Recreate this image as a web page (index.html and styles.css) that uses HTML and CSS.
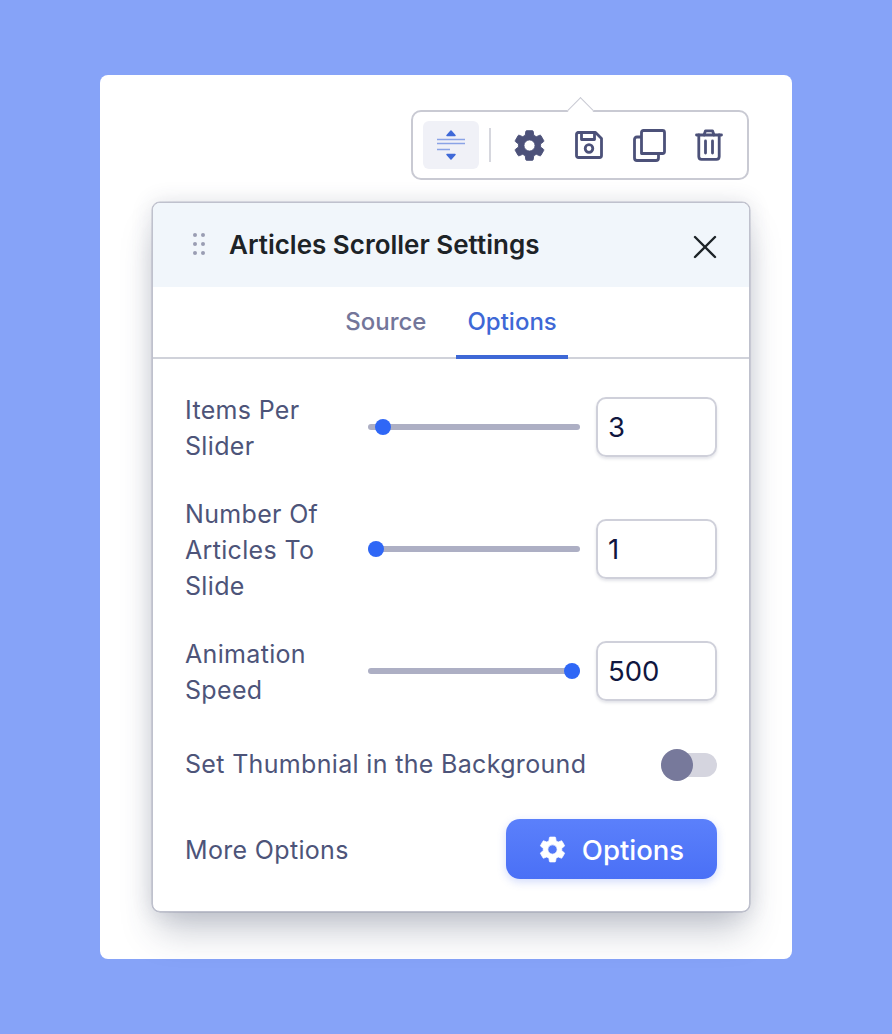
FILE: index.html
```html
<!DOCTYPE html>
<html lang="en">
<head>
<meta charset="utf-8">
<title>Articles Scroller Settings</title>
<link rel="stylesheet" href="styles.css">
</head>
<body>
<main class="card">
  <div class="toolbar">
    <span class="caret"></span>
    <button class="tool active">
      <svg width="30" height="36" viewBox="0 0 30 36" fill="none">
        <path d="M15 4 L19 8.500 H11 Z" fill="#3f69d8" stroke="#3f69d8" stroke-width="1.500" stroke-linejoin="round"/>
        <path d="M15 32 L19 27.500 H11 Z" fill="#3f69d8" stroke="#3f69d8" stroke-width="1.500" stroke-linejoin="round"/>
        <path d="M1 12.500 H29 M1 16.500 H29" stroke="#8aa3e6" stroke-width="1.500"/>
        <path d="M1 22.500 H14" stroke="#8aa3e6" stroke-width="1.500"/>
      </svg>
    </button>
    <span class="sep"></span>
    <button class="tool">
      <svg width="37" height="37" viewBox="0 0 24 24" fill="#4c5179" stroke="#4c5179" stroke-width=".6"><path d="M19.14 12.94c.04-.3.06-.61.06-.94 0-.32-.02-.64-.07-.94l2.03-1.58c.18-.14.23-.41.12-.61l-1.92-3.32c-.12-.22-.37-.29-.59-.22l-2.39.96c-.5-.38-1.03-.7-1.62-.94l-.36-2.54c-.04-.24-.24-.41-.48-.41h-3.84c-.24 0-.43.17-.47.41l-.36 2.54c-.59.24-1.13.57-1.62.94l-2.39-.96c-.22-.08-.47 0-.59.22L2.74 8.87c-.12.21-.08.47.12.61l2.03 1.58c-.05.3-.09.63-.09.94s.02.64.07.94l-2.03 1.58c-.18.14-.23.41-.12.61l1.92 3.32c.12.22.37.29.59.22l2.39-.96c.5.38 1.03.7 1.62.94l.36 2.54c.05.24.24.41.48.41h3.84c.24 0 .44-.17.47-.41l.36-2.54c.59-.24 1.13-.56 1.62-.94l2.39.96c.22.08.47 0 .59-.22l1.92-3.32c.12-.22.07-.47-.12-.61l-2.01-1.58zM12 15.600c-1.980 0-3.600-1.620-3.600-3.600s1.620-3.600 3.600-3.600 3.600 1.620 3.600 3.600-1.620 3.600-3.600 3.600z"/></svg>
    </button>
    <button class="tool">
      <svg width="28" height="28" viewBox="0 0 28 28" fill="none" stroke="#4c5179" stroke-width="2.800" stroke-linejoin="round"><path d="M3 1.500 H20.500 L26.500 7.500 V24.500 Q26.500 26.500 24.500 26.500 H3.500 Q1.500 26.500 1.500 24.500 V3.500 Q1.500 1.500 3.500 1.500 Z"/><path d="M6.500 1.500 V8.500 H19.500 V1.500"/><circle cx="14" cy="17.500" r="3.800"/></svg>
    </button>
    <button class="tool">
      <svg width="33" height="33" viewBox="0 0 33 33" fill="none" stroke="#4c5179" stroke-width="2.800" stroke-linejoin="round"><path d="M8.500 3.500 Q8.500 1.500 10.500 1.500 H29.500 Q31.500 1.500 31.500 3.500 V22.500 Q31.500 24.500 29.500 24.500 H8.500 Z"/><path d="M8.500 8 H4 Q1.500 8 1.500 10.500 V29 Q1.500 31.500 4 31.500 H23 Q25.500 31.500 25.500 29 V24.500"/></svg>
    </button>
    <button class="tool">
      <svg width="28" height="32" viewBox="0 0 28 32" fill="none" stroke="#4c5179" stroke-width="2.800" stroke-linecap="round" stroke-linejoin="round"><path d="M1.500 6 H26.500"/><path d="M9 6 L10.500 1.800 H17.500 L19 6"/><path d="M3.800 6 V27.500 Q3.800 30.300 6.500 30.300 H21.500 Q24.200 30.300 24.200 27.500 V6"/><path d="M10.500 12 V24 M17.500 12 V24"/></svg>
    </button>
  </div>

  <section class="dialog">
    <header class="head">
      <span class="grip"><i></i><i></i><i></i><i></i><i></i><i></i></span>
      <h1 class="title">Articles Scroller Settings</h1>
      <svg class="close" width="24" height="24" viewBox="0 0 24 24" fill="none" stroke="#1d2327" stroke-width="2.400" stroke-linecap="round"><path d="M2 2 L22 22 M22 2 L2 22"/></svg>
    </header>
    <nav class="tabs">
      <span class="tab">Source</span>
      <span class="tab current">Options</span>
    </nav>
    <div class="body">
      <div class="row row-items">
        <label class="label">Items Per<br>Slider</label>
        <div class="slider"><span class="thumb" style="left:15px"></span></div>
        <div class="num">3</div>
      </div>
      <div class="row row-count">
        <label class="label">Number Of<br>Articles To<br>Slide</label>
        <div class="slider"><span class="thumb" style="left:8px"></span></div>
        <div class="num">1</div>
      </div>
      <div class="row row-speed">
        <label class="label">Animation<br>Speed</label>
        <div class="slider"><span class="thumb" style="left:204px"></span></div>
        <div class="num">500</div>
      </div>
      <div class="line toggle-line">
        <span class="label">Set Thumbnial in the Background</span>
        <span class="toggle"><span class="knob"></span></span>
      </div>
      <div class="line more-line">
        <span class="label">More Options</span>
        <button class="options-btn">
          <svg width="31" height="31" viewBox="0 0 24 24" fill="#fff" stroke="#fff" stroke-width=".6"><path d="M19.14 12.94c.04-.3.06-.61.06-.94 0-.32-.02-.64-.07-.94l2.03-1.58c.18-.14.23-.41.12-.61l-1.92-3.32c-.12-.22-.37-.29-.59-.22l-2.39.96c-.5-.38-1.03-.7-1.62-.94l-.36-2.54c-.04-.24-.24-.41-.48-.41h-3.84c-.24 0-.43.17-.47.41l-.36 2.54c-.59.24-1.13.57-1.62.94l-2.39-.96c-.22-.08-.47 0-.59.22L2.74 8.87c-.12.21-.08.47.12.61l2.03 1.58c-.05.3-.09.63-.09.94s.02.64.07.94l-2.03 1.58c-.18.14-.23.41-.12.61l1.92 3.32c.12.22.37.29.59.22l2.39-.96c.5.38 1.03.7 1.62.94l.36 2.54c.05.24.24.41.48.41h3.84c.24 0 .44-.17.47-.41l.36-2.54c.59-.24 1.13-.56 1.62-.94l2.39.96c.22.08.47 0 .59-.22l1.92-3.32c.12-.22.07-.47-.12-.61l-2.01-1.58zM12 15.600c-1.980 0-3.600-1.620-3.600-3.600s1.620-3.600 3.600-3.600 3.600 1.620 3.600 3.600-1.620 3.600-3.600 3.600z"/></svg>
          <span class="btn-text">Options</span>
        </button>
      </div>
    </div>
  </section>
</main>
</body>
</html>
```

FILE: styles.css
```css
* { box-sizing: border-box; }
html, body { margin: 0; height: 100%; }
body {
  background: #86a3f8;
  padding: 75px 100px;
  font-family: Inter, "Liberation Sans", sans-serif;
  overflow: hidden;
}
.card {
  background: #fff;
  width: 692px;
  height: 884px;
  border-radius: 8px;
  padding: 35px 42px 0 52px;
  display: flex;
  flex-direction: column;
  align-items: flex-end;
}
.toolbar {
  position: relative;
  width: 338px;
  height: 70px;
  margin-right: 1px;
  border: 2px solid #c9cad3;
  border-radius: 10px;
  background: #fff;
  display: flex;
  align-items: center;
  padding-left: 10px;
}
.caret {
  position: absolute;
  top: -11px;
  left: 158px;
  width: 19px;
  height: 19px;
  background: #fff;
  border-top: 1.500px solid #c9cad3;
  border-left: 1.500px solid #c9cad3;
  transform: rotate(45deg);
}
.tool {
  width: 56px;
  height: 48px;
  border: 0;
  padding: 0;
  background: none;
  border-radius: 6px;
  display: flex;
  align-items: center;
  justify-content: center;
  margin-right: 4px;
}
.tool.active { background: #f0f1f7; margin-right: 0; }
.sep {
  width: 2px;
  height: 34px;
  background: #d6d7de;
  margin: 0 10px;
}
.dialog {
  width: 598px;
  height: 710px;
  margin-top: 22px;
  border: 1px solid #bfc1cd;
  border-radius: 8px;
  background: #fff;
  box-shadow: 0 24px 36px -6px rgba(50, 60, 90, .28), 0 0 22px rgba(50, 60, 90, .14), 0 0 0 .5px #c9cbd6;
  display: flex;
  flex-direction: column;
  overflow: hidden;
}
.head {
  height: 84px;
  flex: none;
  background: #f1f6fb;
  display: flex;
  align-items: center;
  padding: 0 32px 2px 40px;
}
.grip {
  display: grid;
  grid-template-columns: 4px 4px;
  column-gap: 4px;
  row-gap: 5px;
  width: 12px;
}
.grip i {
  width: 4px;
  height: 4px;
  border-radius: 50%;
  background: #9a9db3;
}
.title {
  margin: 0 0 0 24px;
  font-size: 26px;
  font-weight: 600;
  color: #1d2327;
  flex: 1;
}
.close { margin-top: 6px; }
.tabs {
  height: 72px;
  flex: none;
  border-bottom: 2px solid #d0d2da;
  display: flex;
  justify-content: center;
  gap: 19px;
}
.tab {
  padding: 0 11px;
  height: 72px;
  font-size: 24px;
  font-weight: 500;
  line-height: 70px;
  color: #73769a;
}
.tab.current {
  color: #3e68d6;
  border-bottom: 4px solid #3e68d6;
}
.body {
  padding: 32px 32px 0;
}
.row {
  display: flex;
  align-items: center;
}
.row-items, .row-speed { height: 72px; }
.row-count { height: 108px; margin-top: 32px; }
.row-speed { margin-top: 32px; }
.label {
  font-size: 25px;
  letter-spacing: .33px;
  line-height: 36px;
  color: #4d5479;
}
.row .label { width: 183px; flex: none; padding-top: 2px; }
.toggle-line .label { padding-bottom: 2px; }
.more-line .label { padding-top: 2px; }
.slider {
  position: relative;
  width: 212px;
  height: 6px;
  border-radius: 3px;
  background: #adafc4;
  margin-right: 16px;
}
.thumb {
  position: absolute;
  top: 50%;
  width: 16px;
  height: 16px;
  margin: -8px 0 0 -8px;
  border-radius: 50%;
  background: #2f67f6;
}
.num {
  width: 121px;
  height: 60px;
  border: 2px solid #cfd0da;
  border-radius: 10px;
  box-shadow: 0 2px 3px rgba(60, 65, 100, .14);
  font-size: 27.500px;
  line-height: 56px;
  padding-left: 10px;
  color: #10163f;
}
.line {
  display: flex;
  align-items: center;
  justify-content: space-between;
}
.toggle-line { margin-top: 40px; height: 36px; }
.more-line { margin-top: 36px; height: 60px; }
.toggle {
  position: relative;
  width: 56px;
  height: 24px;
  border-radius: 12px;
  background: #d5d5df;
}
.knob {
  position: absolute;
  left: 0;
  top: -4px;
  width: 32px;
  height: 32px;
  border-radius: 50%;
  background: #77799b;
}
.options-btn {
  width: 211px;
  height: 60px;
  border: 0;
  border-radius: 14px;
  background: linear-gradient(180deg, #5b80fb 0%, #4a70f6 100%);
  box-shadow: 0 3px 8px rgba(80, 115, 245, .25);
  color: #fff;
  font-family: inherit;
  font-size: 27.500px;
  font-weight: 500;
  display: flex;
  align-items: center;
  justify-content: center;
  gap: 14px;
  padding: 0 2px 0 0;
}
.btn-text { padding-top: 2px; }
```
